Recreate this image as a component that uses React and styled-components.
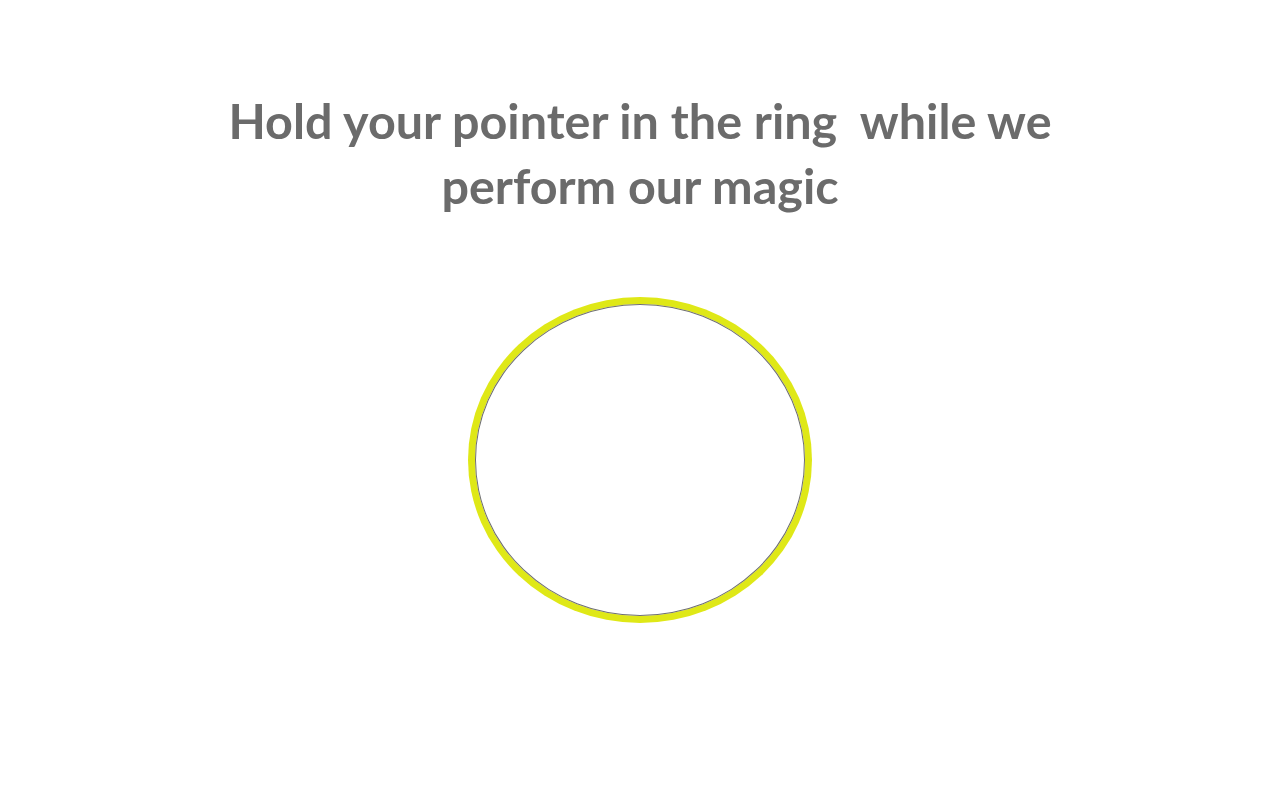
import React from "react";
import styled, { createGlobalStyle } from "styled-components";

const Global = createGlobalStyle`
  html, body {
    margin: 0;
    padding: 0;
    background: #ffffff;
  }
  body {
    font-family: Lato, "Open Sans", sans-serif;
  }
`;

const Page = styled.main`
  display: flex;
  flex-direction: column;
  align-items: center;
  padding-top: 88px;
  min-height: 800px;
  box-sizing: border-box;
`;

const Title = styled.h1`
  margin: 0;
  max-width: 880px;
  font-family: Lato, "Open Sans", sans-serif;
  font-weight: 700;
  font-size: 48.5px;
  line-height: 65px;
  color: #6b6b6b;
  text-align: center;
  white-space: pre-wrap;
`;

const Ring = styled.div`
  margin-top: 86px;
  width: 330px;
  height: 312px;
  box-sizing: border-box;
  border: 1px solid #6f6f6f;
  border-radius: 50%;
  box-shadow: 0 0 0 7px #dfe817;
`;

export default function App() {
  return (
    <>
      <Global />
      <Page>
        <Title>Hold your pointer in the ring  while we perform our magic</Title>
        <Ring />
      </Page>
    </>
  );
}
